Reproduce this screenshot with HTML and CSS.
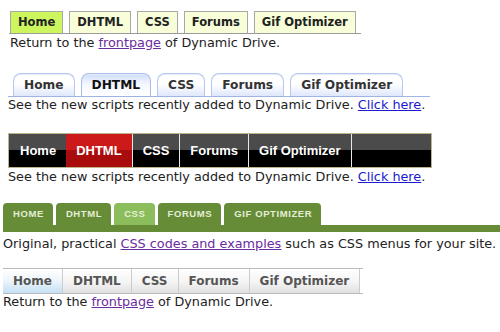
FILE: index.html
```html
<!DOCTYPE html>
<html>
<head>
<meta charset="utf-8">
<link rel="stylesheet" href="styles.css">
</head>
<body>
<div class="sec s1">
  <ul class="m1">
    <li><a class="on">Home</a></li>
    <li><a>DHTML</a></li>
    <li><a>CSS</a></li>
    <li><a>Forums</a></li>
    <li><a>Gif Optimizer</a></li>
  </ul>
  <p class="txt">Return to the <a class="lk v">frontpage</a> of Dynamic Drive.</p>
</div>

<div class="sec s2">
  <ul class="m2">
    <li><a>Home</a></li>
    <li><a class="on">DHTML</a></li>
    <li><a>CSS</a></li>
    <li><a>Forums</a></li>
    <li><a>Gif Optimizer</a></li>
  </ul>
  <p class="txt">See the new scripts recently added to Dynamic Drive. <a class="lk b">Click here</a>.</p>
</div>

<div class="sec s3">
  <ul class="m3">
    <li><a>Home</a></li>
    <li><a class="on">DHTML</a></li>
    <li><a>CSS</a></li>
    <li><a>Forums</a></li>
    <li><a>Gif Optimizer</a></li>
  </ul>
  <p class="txt">See the new scripts recently added to Dynamic Drive. <a class="lk b">Click here</a>.</p>
</div>

<div class="sec s4">
  <ul class="m4">
    <li><a>Home</a></li>
    <li><a>DHTML</a></li>
    <li><a class="on">CSS</a></li>
    <li><a>Forums</a></li>
    <li><a>Gif Optimizer</a></li>
  </ul>
  <div class="band"></div>
  <p class="txt">Original, practical <a class="lk v">CSS codes and examples</a> such as CSS menus for your site.</p>
</div>

<div class="sec s5">
  <ul class="m5">
    <li><a class="on">Home</a></li>
    <li><a>DHTML</a></li>
    <li><a>CSS</a></li>
    <li><a>Forums</a></li>
    <li><a>Gif Optimizer</a></li>
  </ul>
  <p class="txt">Return to the <a class="lk v">frontpage</a> of Dynamic Drive.</p>
</div>
</body>
</html>
```

FILE: styles.css
```css
html, body {
  margin: 0;
  padding: 0;
  background: #fff;
}
body {
  font-family: "DejaVu Sans", Verdana, sans-serif;
  font-size: 12.8px;
  color: #222;
}
ul {
  list-style: none;
  margin: 0;
  padding: 0;
  display: flex;
}
li { white-space: nowrap; }
.txt {
  margin: 0;
  line-height: 15px;
  font-size: 12.8px;
  color: #222;
  white-space: nowrap;
}
.lk { text-decoration: underline; }
.lk.v { color: #6a2c9e; }
.lk.b { color: #1a1ad0; }

/* ---------- Menu 1 ---------- */
.s1 { padding: 11px 0 0 9px; width: 352px; }
.m1 {
  border-bottom: 1px solid #9a9a9a;
  padding-left: 1px;
  gap: 6px;
}
.m1 a {
  display: block;
  font-weight: bold;
  font-size: 11.5px;
  line-height: 21px;
  padding: 0 7px;
  background: #f8ffd8;
  border: 1px solid #a8a8a8;
  border-bottom: none;
  color: #222;
}
.m1 a.on { background: #ccf55e; }
.s1 .txt { padding-left: 1px; margin-top: 1px; }

/* ---------- Menu 2 ---------- */
.s2 { padding: 23px 0 0 8px; width: 422px; }
.m2 {
  border-bottom: 1px solid #9fb4e2;
  padding-left: 5px;
  gap: 6px;
}
.m2 a {
  display: block;
  font-weight: bold;
  font-size: 12.2px;
  line-height: 21px;
  padding: 1px 10px 0;
  color: #333;
  border: 1px solid #b7c8ee;
  border-bottom: none;
  border-radius: 8px 8px 0 0;
  box-shadow: inset 0 1px 0 #e4ebfb;
  background: linear-gradient(#ffffff 0%, #ffffff 45%, #dfe7fb 100%);
}
.m2 a.on {
  color: #111;
  background: linear-gradient(#cfdcf8 0%, #f4f7ff 45%, #ffffff 100%);
  border-color: #a9bde9;
}

/* ---------- Menu 3 ---------- */
.s3 { padding: 21px 0 0 8px; width: 424px; }
.m3 {
  border: 1px solid #bdb48a;
  background: linear-gradient(#4b4b4b 0%, #4b4b4b 50%, #000 50%, #000 100%);
  padding-left: 1px;
}
.m3 li { border-right: 1px solid #e8e8e8; }
.m3 li:nth-child(1) { border-right: none; }
.m3 a {
  display: block;
  font-family: "Liberation Sans", Arial, sans-serif;
  font-weight: bold;
  font-size: 13px;
  line-height: 33px;
  padding: 0 10px;
  color: #fff;
}
.m3 a.on {
  background: linear-gradient(#cc1a1a 0%, #cc1a1a 50%, #a80c0c 50%, #a80c0c 100%);
}
.s3 .txt { margin-top: 1px; }

/* ---------- Menu 4 ---------- */
.s4 { padding: 19px 0 0 3px; }
.m4 { gap: 3px; }
.m4 a {
  display: block;
  font-family: "Liberation Sans", Arial, sans-serif;
  font-size: 9.5px;
  font-weight: bold;
  letter-spacing: 0.6px;
  text-transform: uppercase;
  line-height: 22px;
  padding: 0 9px 0 10px;
  color: #e4eed6;
  background: #668c37;
  border-radius: 4px 4px 0 0;
}
.m4 a.on { background: #8cbd5c; }
.band { height: 7px; background: #668c37; }
.s4 .txt { margin-top: 4px; }

/* ---------- Menu 5 ---------- */
.s5 { padding: 17px 0 0 3px; width: 360px; }
.m5 {
  border-top: 1px solid #bbb;
  border-bottom: 1px solid #bbb;
}
.m5 li { border-right: 1px solid #ccc; }
.m5 a {
  display: block;
  font-weight: bold;
  font-size: 12px;
  line-height: 24px;
  padding: 0 10px;
  color: #555;
  background: linear-gradient(#ffffff 0%, #f4f4f4 55%, #e0e0e0 100%);
}
.m5 a.on {
  background: linear-gradient(#ffffff 0%, #f0f6fb 45%, #c4e0f4 100%);
}
```
